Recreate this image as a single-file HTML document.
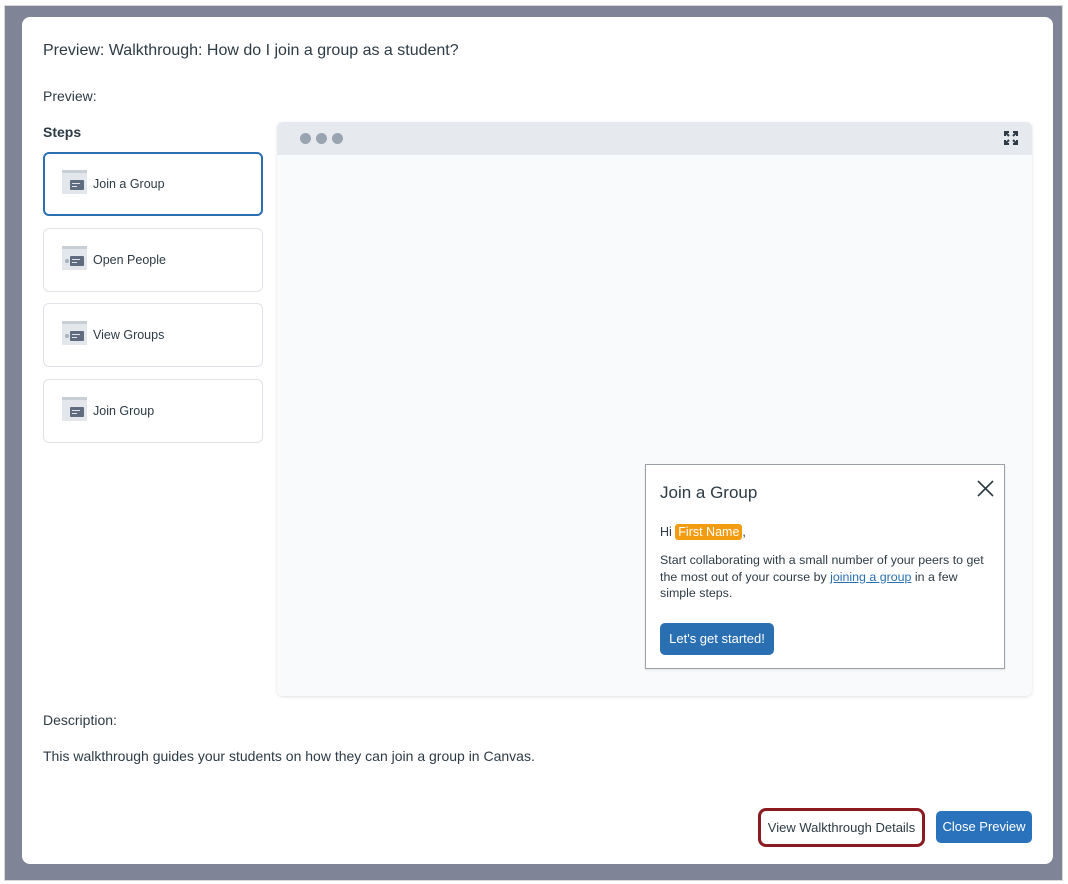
<!DOCTYPE html>
<html><head><style>
*{box-sizing:border-box;margin:0;padding:0}
body{width:1068px;height:884px;background:#fff;font-family:"Liberation Sans",sans-serif;color:#2d3b45;position:relative;overflow:hidden}
.bg{position:absolute;left:4px;top:5px;width:1059px;height:876px;background:#7f8596;border:1px solid #d8d8d8}
.modal{position:absolute;left:22px;top:17px;width:1031px;height:847px;background:#fff;border-radius:8px}
.t{position:absolute;font-size:15.5px}
.card{position:absolute;left:43px;width:220px;height:64px;border:1px solid #dfe3e7;border-radius:6px;background:#fff}
.card.sel{border:2px solid #2b6fb3}
.card span{position:absolute;left:49px;top:24px;font-size:12.5px;color:#2d3b45}
.card.sel span{left:48px;top:23px}
.ic{position:absolute;left:18px;top:17px;width:25px;height:24px;background:#e3e7ec}
.card.sel .ic{left:17px;top:16px}
.ic:before{content:"";position:absolute;left:0;top:0;width:25px;height:3px;background:#c8ced6}
.ic i{position:absolute;left:8px;top:10px;width:14px;height:10px;background:#5f6b7e;border-radius:1px}
.ic i:before{content:"";position:absolute;left:2px;top:3px;width:8px;height:1px;background:#dfe3e8}
.ic i:after{content:"";position:absolute;left:2px;top:6px;width:5px;height:1px;background:#dfe3e8}
.ic b{position:absolute;left:3px;top:13px;width:4px;height:4px;border-radius:50%;background:#a9b1bc}
.prev{position:absolute;left:277px;top:122px;width:755px;height:574px;background:#f9fafb;border-radius:6px;box-shadow:0 1px 3px rgba(0,0,0,.12);overflow:hidden}
.bar{height:33px;background:#e6eaee}
.dot{position:absolute;top:11px;width:11px;height:11px;border-radius:50%;background:#9aa3b0}
.pop{position:absolute;left:645px;top:464px;width:360px;height:205px;background:#fff;border:1px solid #9aa0a6;box-shadow:0 1px 2px rgba(0,0,0,.1);font-family:"Liberation Sans",sans-serif;color:#2d3b45}
.btn{position:absolute;border-radius:5px;font-size:13px}
</style></head><body>
<div class="bg"></div>
<div class="modal"></div>
<div class="t" style="left:43px;top:42px;font-size:16px">Preview: Walkthrough: How do I join a group as a student?</div>
<div class="t" style="left:43px;top:88px;font-size:14px">Preview:</div>
<div class="t" style="left:43px;top:124px;font-size:14px;font-weight:bold">Steps</div>
<div class="card sel" style="top:152px"><div class="ic"><i></i></div><span>Join a Group</span></div>
<div class="card" style="top:228px"><div class="ic"><b></b><i></i></div><span>Open People</span></div>
<div class="card" style="top:303px"><div class="ic"><b></b><i></i></div><span>View Groups</span></div>
<div class="card" style="top:379px"><div class="ic"><i></i></div><span>Join Group</span></div>
<div class="prev"><div class="bar"></div>
<div class="dot" style="left:23px"></div><div class="dot" style="left:39px"></div><div class="dot" style="left:55px"></div>
<svg style="position:absolute;left:726px;top:8px" width="16" height="16" viewBox="0 0 16 16" fill="none" stroke="#2d3b45" stroke-width="2"><path d="M2 6V2h4M2 2l4 4M14 6V2h-4M14 2l-4 4M2 10v4h4M2 14l4-4M14 10v4h-4M14 14l-4-4"/></svg>
</div>
<div class="pop">
<div style="position:absolute;left:14px;top:18px;font-size:17px">Join a Group</div>
<svg style="position:absolute;left:331px;top:15px" width="17" height="17" viewBox="0 0 17 17" stroke="#2d3b45" stroke-width="1.6"><path d="M1 1l15 15M16 1L1 16"/></svg>
<div style="position:absolute;left:14px;top:60px;font-size:12.5px">Hi <span style="background:#f39c12;color:#fff;border-radius:3px;padding:1px 3px">First Name</span>,</div>
<div style="position:absolute;left:14px;top:87px;width:345px;font-size:12.4px;line-height:16.5px;white-space:nowrap">Start collaborating with a small number of your peers to get<br>the most out of your course by <span style="color:#2b6fb3;text-decoration:underline">joining a group</span> in a few<br>simple steps.</div>
<div class="btn" style="left:14px;top:158px;width:114px;height:32px;background:#2b6fb3;color:#fff;font-size:13px;text-align:center;line-height:32px">Let's get started!</div>
</div>
<div class="t" style="left:43px;top:712px;font-size:14px">Description:</div>
<div class="t" style="left:43px;top:748px;font-size:14px">This walkthrough guides your students on how they can join a group in Canvas.</div>
<div class="btn" style="left:758px;top:808px;width:167px;height:39px;border:3px solid #8b1a1f;border-radius:8px;background:#fff;text-align:center;line-height:33px">View Walkthrough Details</div>
<div class="btn" style="left:936px;top:811px;width:96px;height:32px;background:#2b72bd;color:#fff;text-align:center;line-height:32px">Close Preview</div>
</body></html>
